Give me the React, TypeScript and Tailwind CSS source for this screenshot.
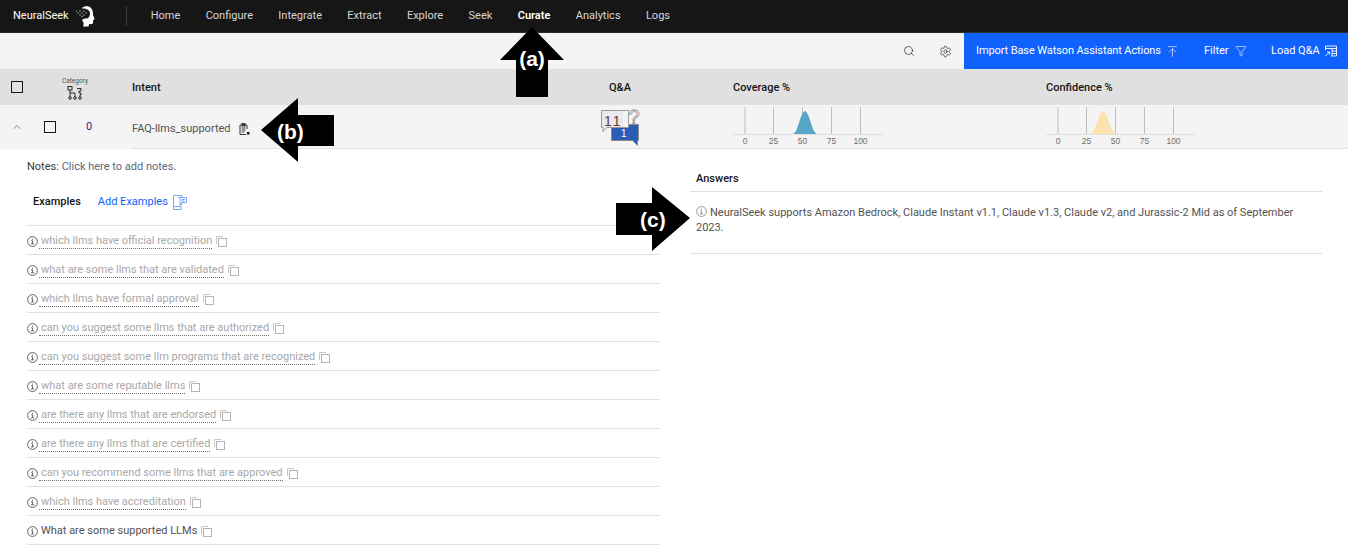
import { ArrowUpToLine, ChevronUp, Filter, Search, Settings } from 'lucide-react'

const NAV = ['Home', 'Configure', 'Integrate', 'Extract', 'Explore', 'Seek', 'Curate', 'Analytics', 'Logs']

const EXAMPLES = [
  'which llms have official recognition',
  'what are some llms that are validated',
  'which llms have formal approval',
  'can you suggest some llms that are authorized',
  'can you suggest some llm programs that are recognized',
  'what are some reputable llms',
  'are there any llms that are endorsed',
  'are there any llms that are certified',
  'can you recommend some llms that are approved',
  'which llms have accreditation',
]

function InfoIcon({ className = '' }: { className?: string }) {
  return (
    <svg width="11" height="11" viewBox="0 0 11 11" fill="none" stroke="currentColor" className={className}>
      <circle cx="5.5" cy="5.5" r="4.9" strokeWidth="0.9" />
      <path d="M4.2 4.8h1.4v2.9M4 7.8h3.1" strokeWidth="0.9" />
      <path d="M5.5 2.6v1" strokeWidth="1.1" />
    </svg>
  )
}

function CopyIcon() {
  return (
    <svg width="12" height="12" viewBox="0 0 12 12" fill="none" className="mt-0.5 ml-1 shrink-0">
      <path d="M7 .5H.5V8" stroke="#c6c6c6" />
      <rect x="2.500" y="2.500" width="8" height="8" stroke="#b4b4b4" />
    </svg>
  )
}

function Checkbox() {
  return <span className="block h-3 w-3 border border-[#161616]" />
}

function Logo() {
  return (
    <svg width="22" height="22" viewBox="0 0 22 22" className="shrink-0">
      <path
        d="M7 3C9 1 13 .5 15.500 2.500c2.500 2 2.500 5 2.500 7 0 1.500 1.500 3 1.500 4.500 0 .8-1 1-1.500 1.200l.2 2.300c0 1.800-2 1.800-4 1.500l-.7 2.500H8c1-2 .8-4-.5-5.500-1-1.500 1-2.500 3-2.500 3 0 4.500-2 4.500-5 0-3-3-5.500-8-5z"
        fill="#fff"
      />
      <g fill="#bdbdbd">
        <circle cx="3" cy="8" r=".7" />
        <circle cx="5" cy="6" r=".7" />
        <circle cx="7" cy="8" r=".7" />
        <circle cx="9" cy="6" r=".7" />
        <circle cx="9" cy="10" r=".7" />
        <circle cx="11" cy="8" r=".7" />
        <circle cx="5" cy="10" r=".7" />
        <circle cx="1.500" cy="6" r=".6" />
        <circle cx="7" cy="11.500" r=".7" />
      </g>
    </svg>
  )
}

function CategoryIcon() {
  return (
    <svg width="16" height="14" viewBox="0 0 16 14" fill="none" stroke="#161616" strokeWidth="0.9">
      <rect x="1" y="0.500" width="4" height="3.500" />
      <path d="M3 4v7M3 7h5v4M10 2.500h4V5h-2v2h2v2h-1v2" />
      <circle cx="3" cy="12" r="1.300" />
      <circle cx="8" cy="12" r="1.300" />
      <circle cx="13" cy="12" r="1.300" />
    </svg>
  )
}

function LoadIcon() {
  return (
    <svg width="12" height="12" viewBox="0 0 12 12" fill="none" stroke="currentColor" strokeWidth="0.9" className="shrink-0">
      <path d="M.5 5V1h11v10H6M.5 3.500h11M7 3.500V11M7 6h4.500M7 8.500h4.500" />
      <path d="M.5 11 4.500 7M2 7h2.500v2.500" />
    </svg>
  )
}

function ExamplesIcon() {
  return (
    <svg width="15" height="15" viewBox="0 0 15 15" fill="none" stroke="#7aa5fb" strokeWidth="1" className="ml-1">
      <path d="M9 14.500H1.500V.500H10v2" />
      <path d="M1.500 11.500H9v3" />
      <path d="M6 2.500h8.500v5H9.500V10H8V2.500" />
      <path d="M9.500 4.500h3.500M9.500 6h3" />
    </svg>
  )
}

// Q&A count badge: grey "11" bubble over the blue "1" bubble
function QaBadge() {
  return (
    <svg width="46" height="40" viewBox="0 0 46 40" className="block">
      <text x="27.500" y="17" fontSize="20" fill="#fff" stroke="#8d8d8d" strokeWidth="0.8" fontFamily="'Liberation Sans', sans-serif">?</text>
      <path d="M10.500 17.500h27v16h-1v5l-5-5H10.500z" fill="#2c5db5" stroke="#8a8a8a" strokeWidth="1" />
      <path d="M.5 3.500h27v17H6l-4 4v-4H.5z" fill="#e8eaee" stroke="#9a9a9a" strokeWidth="1" />
      <path d="M22 4h5v16h-5z" fill="#f4f4f4" />
      <text x="3" y="19" fontSize="14" fill="#6b3a35" fontFamily="'Liberation Sans', sans-serif" letterSpacing="2">11</text>
      <text x="20" y="30" fontSize="10" fill="#fff" fontFamily="'Liberation Sans', sans-serif">1</text>
    </svg>
  )
}

function Distribution({ fill, path }: { fill: string; path: string }) {
  return (
    <svg width="150" height="40" viewBox="0 0 150 40" className="block">
      {[12, 40.500, 69.500, 98.500, 127.500].map((x) => (
        <path key={x} d={`M${x} 0v27`} stroke="#bdbdbd" strokeWidth="1" />
      ))}
      <path d={path} fill={fill} fillOpacity="0.92" />
      <path d="M0 27.500h150" stroke="#e0e0e0" strokeWidth="1" />
      {[
        ['0', 12],
        ['25', 40.500],
        ['50', 69.500],
        ['75', 98.500],
        ['100', 127.500],
      ].map(([label, x]) => (
        <text
          key={label}
          x={x}
          y="37"
          textAnchor="middle"
          fontSize="8.500"
          fill="#6f6f6f"
          fontFamily="'Liberation Sans', sans-serif"
        >
          {label}
        </text>
      ))}
    </svg>
  )
}

export default function App() {
  return (
    <div className="relative h-[551px] overflow-hidden bg-white font-['Roboto',sans-serif] text-[11px] text-[#393939]">
      <header className="flex h-[33px] items-center border-b border-[#2b2b2b] bg-[#161616] pl-[13px]">
        <span className="w-[62px] text-[11px] text-white">NeuralSeek</span>
        <Logo />
        <span className="mr-[11px] ml-[29px] h-5 w-px bg-[#3d3d3d]" />
        <nav className="flex items-center">
          {NAV.map((item) => (
            <span
              key={item}
              className={item === 'Curate' ? 'px-[12.7px] font-semibold text-white' : 'px-[12.7px] text-[#d6d6d6]'}
            >
              {item}
            </span>
          ))}
        </nav>
      </header>

      <div className="flex h-9 items-center justify-end bg-[#f4f4f4]">
        <Search size={12} className="mr-6 text-[#262626]" strokeWidth={1.400} />
        <Settings size={13} className="mr-3 text-[#262626]" strokeWidth={1.300} />
        <div className="flex h-9 w-[384px] shrink-0 items-center bg-[#0f62fe] whitespace-nowrap text-white">
          <span className="ml-3 w-[185px] tracking-[-0.1px]">Import Base Watson Assistant Actions</span>
          <ArrowUpToLine size={13} className="ml-[5px]" strokeWidth={1.200} />
          <span className="ml-[25px] w-[26px]">Filter</span>
          <Filter size={12} className="ml-[5px]" strokeWidth={1.200} />
          <span className="ml-6 w-[49px]">Load Q&amp;A</span>
          <span className="ml-[5px]">
            <LoadIcon />
          </span>
        </div>
      </div>

      <div className="grid h-9 grid-cols-[132px_477px_124px_313px_1fr] items-center bg-[#e0e0e0] font-medium text-[#161616]">
        <div className="flex items-center pl-[11px]">
          <Checkbox />
          <div className="ml-[34px] flex w-[36px] flex-col items-center">
            <span className="mt-0.5 text-[6.5px] leading-[9px] font-normal text-[#525252]">Category</span>
            <CategoryIcon />
          </div>
        </div>
        <span className="mt-0.5">Intent</span>
        <span className="mt-0.5">Q&amp;A</span>
        <span className="mt-0.5">Coverage %</span>
        <span className="mt-0.5">Confidence %</span>
      </div>

      <div className="ml-[33px] grid h-11 grid-cols-[99px_477px_124px_313px_1fr] items-center border-b border-[#e0e0e0] bg-[#f4f4f4]">
        <div className="-ml-[33px] flex h-11 w-[132px] items-center bg-[#f4f4f4] pl-[11px]">
          <ChevronUp size={12} className="text-[#393939]" strokeWidth={1.200} />
          <span className="ml-[21px]">
            <Checkbox />
          </span>
          <span className="mt-px ml-[30px] text-[#2a2a8a]">0</span>
        </div>
        <div className="-ml-[33px] mt-1 flex items-center pl-[33px]">
          <span className="text-[#525252]">FAQ-llms_supported</span>
          <svg width="11" height="12" viewBox="0 0 11 12" fill="none" stroke="#393939" className="ml-2">
            <path d="M3 2H1v9.500h6M8 6V2H6" />
            <rect x="3" y=".500" width="3" height="2.500" fill="#393939" />
            <path d="M2.500 5h4M2.500 7h4M2.500 9h3" />
            <rect x="8" y="9" width="2.500" height="2.500" fill="#161616" stroke="none" />
          </svg>
        </div>
        <div className="-ml-[8px]">
          <QaBadge />
        </div>
        <Distribution fill="#4a9fc4" path="M60 27C65 26 67 6 72 4c5 2 7 22 12 23z" />
        <Distribution fill="#fbe0a8" path="M44 27C50 26 52 6 57 4c5 2 7 22 14 23z" />
      </div>

      <main className="grid grid-cols-[633px_632px] gap-x-[30px] pl-[27px]">
        <section>
          <p className="mt-[11px] leading-[13px]">
            <span className="text-[#393939]">Notes:</span> <span className="text-[#5a6a7a]">Click here to add notes.</span>
          </p>
          <div className="mt-5 flex h-[18px] items-center pl-[6px]">
            <span className="font-medium text-[#161616]">Examples</span>
            <span className="ml-[17px] text-[#0f62fe]">Add Examples</span>
            <ExamplesIcon />
          </div>
          <ul className="mt-[14px] border-t border-[#e0e0e0]">
            {EXAMPLES.map((text) => (
              <li key={text} className="flex h-[29px] items-center border-b border-[#e0e0e0] pt-[2px]">
                <InfoIcon className="shrink-0 text-[#525252]" />
                <span className="ml-px border-b border-dotted border-[#6f6f6f] pl-[2px] leading-[14px] text-[#a8a8a8]">{text}</span>
                <CopyIcon />
              </li>
            ))}
            <li className="flex h-[29px] items-center border-b border-[#e0e0e0] pt-[2px]">
              <InfoIcon className="shrink-0 text-[#525252]" />
              <span className="ml-[3px] text-[#525252]">What are some supported LLMs</span>
              <CopyIcon />
            </li>
          </ul>
        </section>

        <section>
          <h2 className="mt-[21px] border-b border-[#e0e0e0] pb-1 pl-[6px] leading-[17px] font-medium text-[#161616]">Answers</h2>
          <div className="h-[62px] border-b border-[#e0e0e0] pt-[13px] pl-[6px] leading-[15px] text-[#525252]">
            <InfoIcon className="mr-[3px] inline-block align-[-1px] text-[#8d8d8d]" />
            NeuralSeek supports Amazon Bedrock, Claude Instant v1.1, Claude v1.3, Claude v2, and Jurassic-2 Mid as of September 2023.
          </div>
        </section>
      </main>

      {/* annotation arrows lying over the screenshot */}
      <div className="absolute top-[27px] left-[500px] h-[70px] w-16">
        <svg width="64" height="70" viewBox="0 0 64 70" className="block">
          <path d="M32 0 64 33H48v37H16V33H0z" fill="#000" />
        </svg>
        <span className="absolute inset-x-0 top-[16px] text-center font-['Liberation_Sans',sans-serif] text-[21px] font-bold text-white">(a)</span>
      </div>
      <div className="absolute top-[98px] left-[261px] h-16 w-[73px]">
        <svg width="73" height="64" viewBox="0 0 73 64" className="block">
          <path d="M0 32 37 0v17h36v31H37v16z" fill="#000" />
        </svg>
        <span className="absolute top-[18px] left-[16px] font-['Liberation_Sans',sans-serif] text-[21px] font-bold text-white">(b)</span>
      </div>
      <div className="absolute top-[187px] left-[616px] h-16 w-[74px]">
        <svg width="74" height="64" viewBox="0 0 74 64" className="block">
          <path d="M74 31 36 0v16H0v32h36v16z" fill="#000" />
        </svg>
        <span className="absolute top-[17px] left-[24px] font-['Liberation_Sans',sans-serif] text-[21px] font-bold text-white">(c)</span>
      </div>
    </div>
  )
}
